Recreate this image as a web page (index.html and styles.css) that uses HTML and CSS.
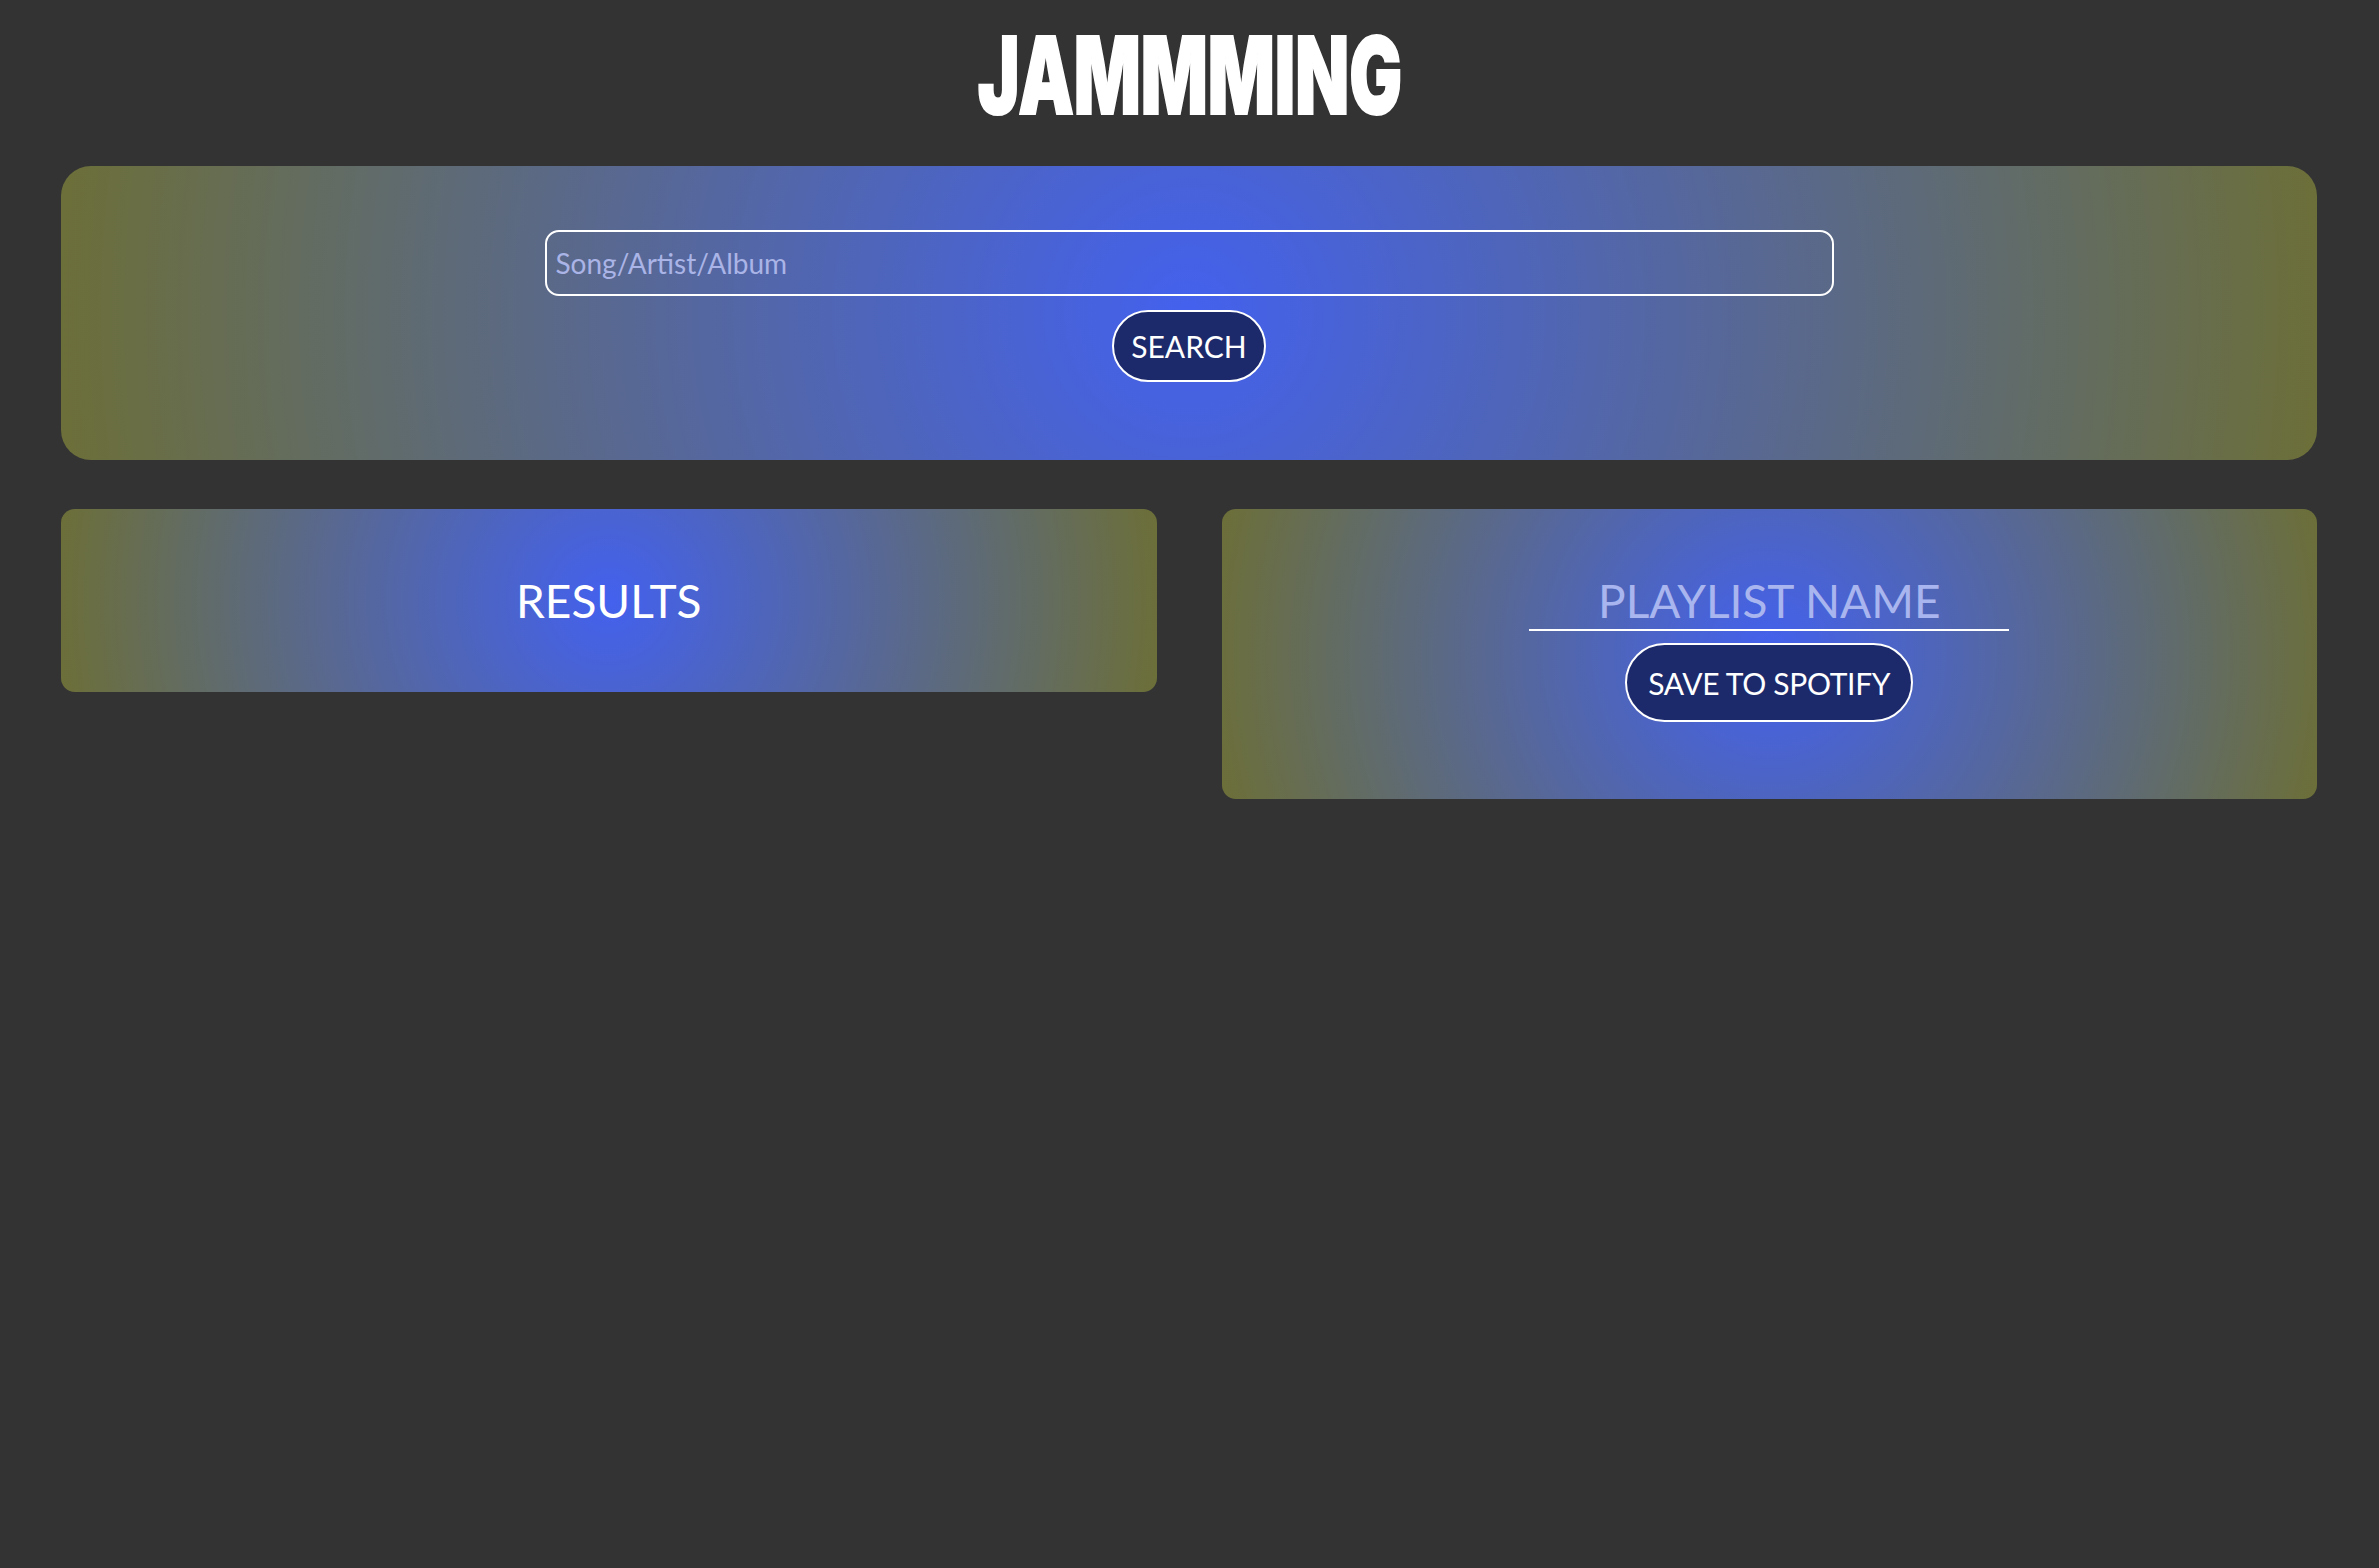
FILE: index.html
```html
<!DOCTYPE html>
<html lang="en">
<head>
<meta charset="utf-8">
<title>Jammming</title>
<link rel="stylesheet" href="styles.css">
</head>
<body>
<header class="header">
  <h1 class="logo">JAMMMING</h1>
</header>
<main class="app">
  <section class="search-bar panel">
    <input class="search-input" type="text" placeholder="Song/Artist/Album">
    <button class="search-button" type="button">SEARCH</button>
  </section>
  <div class="lists">
    <section class="results panel">
      <h2 class="results-title">RESULTS</h2>
    </section>
    <section class="playlist panel">
      <input class="playlist-name" type="text" placeholder="PLAYLIST NAME">
      <button class="save-button" type="button">SAVE TO SPOTIFY</button>
    </section>
  </div>
</main>
</body>
</html>
```
FILE: styles.css
```css
* { box-sizing: border-box; }

html, body {
  margin: 0;
  padding: 0;
  background: #333333;
  min-height: 100%;
}

body {
  font-family: Lato, "Open Sans", "Liberation Sans", sans-serif;
  color: #ffffff;
  width: 2379px;
  min-height: 1568px;
}

.header {
  display: flex;
  justify-content: center;
  height: 166px;
  padding-top: 22px;
}

.logo {
  margin: 0;
  font-family: Inter, "DejaVu Sans Condensed", sans-serif;
  font-weight: 900;
  font-size: 107px;
  line-height: 106px;
  letter-spacing: 0;
  color: #ffffff;
  -webkit-text-stroke: 2px #ffffff;
  transform: scaleX(0.655);
}

.app {
  padding: 0 62px 0 61px;
}

.panel {
  background: radial-gradient(circle, #4361ee 0%, #6c6f38 100%);
}

.search-bar {
  display: flex;
  flex-direction: column;
  align-items: center;
  height: 294px;
  padding-top: 64px;
  border-radius: 30px;
}

.search-input {
  width: 1289px;
  height: 66px;
  border: 2px solid #ffffff;
  border-radius: 14px;
  background: transparent;
  padding: 0 9px;
  font-family: Lato, "Open Sans", sans-serif;
  font-size: 28px;
  color: #ffffff;
  outline: none;
}

.search-input::placeholder {
  color: #aab4e6;
}

.search-button,
.save-button {
  background: #1c2a6c;
  color: #ffffff;
  border: 2px solid #ffffff;
  border-radius: 999px;
  font-family: Lato, "Open Sans", sans-serif;
  cursor: pointer;
}

.search-button {
  margin-top: 14px;
  height: 72px;
  padding: 0 17px;
  font-size: 30px;
  line-height: 36px;
}

.lists {
  display: grid;
  grid-template-columns: 1fr 1fr;
  gap: 65px;
  margin-top: 49px;
  align-items: start;
}

.results {
  display: flex;
  justify-content: center;
  align-items: center;
  height: 183px;
  border-radius: 14px;
}

.results-title {
  margin: 0;
  font-weight: 400;
  font-size: 46px;
  line-height: 56px;
  color: #ffffff;
}

.playlist {
  display: flex;
  flex-direction: column;
  align-items: center;
  height: 290px;
  padding-top: 62px;
  border-radius: 14px;
}

.playlist-name {
  width: 480px;
  height: 60px;
  border: none;
  border-bottom: 2px solid #ffffff;
  background: transparent;
  padding: 0;
  text-align: center;
  font-family: Lato, "Open Sans", sans-serif;
  font-size: 46px;
  color: #ffffff;
  outline: none;
}

.playlist-name::placeholder {
  color: #a9b5ee;
}

.save-button {
  margin-top: 12px;
  height: 79px;
  padding: 0 21px;
  font-size: 30px;
  letter-spacing: -0.3px;
  line-height: 40px;
}
```
